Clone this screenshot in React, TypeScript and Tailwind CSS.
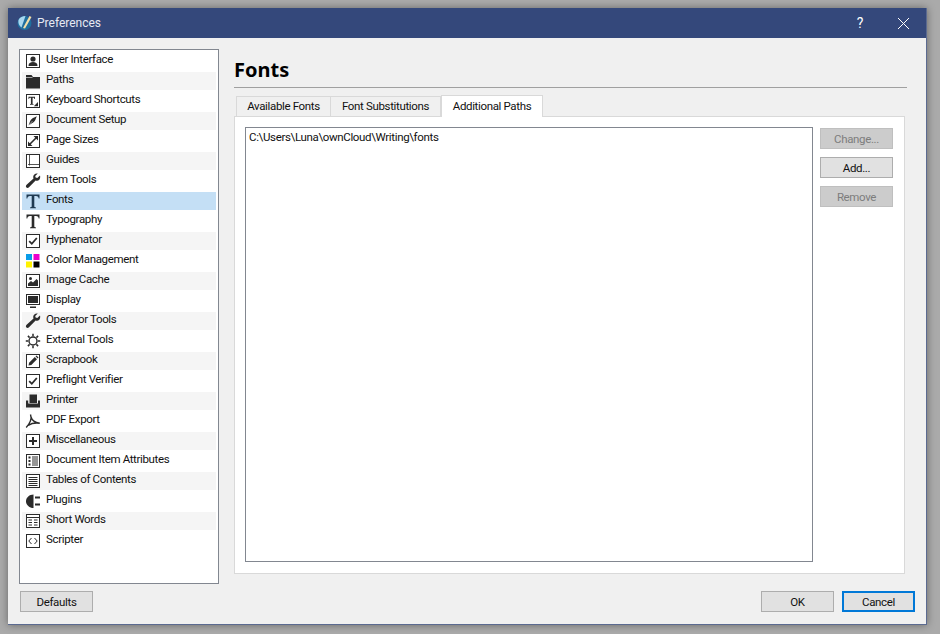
import React from 'react';

const ink = '#2b2b2b';

// small frame used by most of the preference icons
const Frame = ({ children }: { children?: React.ReactNode }) => (
    <svg width="16" height="16" viewBox="0 0 16 16" className="shrink-0">
        <rect x="1.5" y="1.5" width="13" height="13" fill="#fff" stroke={ink} />
        {children}
    </svg>
);

const Bare = ({ children }: { children?: React.ReactNode }) => (
    <svg width="16" height="16" viewBox="0 0 16 16" className="shrink-0">
        {children}
    </svg>
);

const wrench = 'M15 2.500 12.300 5 10.600 4.600 10.200 3 12.800 .6C10.500 .1 8.300 1.500 8.200 3.700 8.200 4.300 8.300 4.900 8.500 5.400L1.600 11.800C.7 12.700.7 13.800 1.400 14.500 2.100 15.200 3.200 15.200 4 14.300L10.600 7.600C11.100 7.800 11.700 7.900 12.300 7.800 14.500 7.500 15.700 5 15 2.500z';
const check = <path d="M4.200 8.200 6.800 10.800 11.800 5" fill="none" stroke={ink} strokeWidth="1.800" />;
const tShape = 'M1.500 1.500h13v4h-.8c-.2-1.600-.9-2.500-2.700-2.500H9.300v10c0 1 .4 1.300 1.700 1.400v.8H5v-.8c1.300-.1 1.700-.4 1.700-1.400V3H5c-1.800 0-2.500.9-2.700 2.500h-.8z';

const icons: Record<string, React.ReactNode> = {
    'User Interface': (
        <Frame>
            <circle cx="8" cy="6" r="2.600" fill={ink} />
            <path d="M3.500 13c0-3 1.800-4 4.500-4s4.500 1 4.500 4z" fill={ink} />
        </Frame>
    ),
    Paths: (
        <Bare>
            <path d="M1 2h5.500L8 4H15V15.500H1z" fill={ink} />
            <path d="M1 4.500h6.500" stroke="#fff" strokeWidth="0.600" />
        </Bare>
    ),
    'Keyboard Shortcuts': (
        <Frame>
            <path d="M3.500 3.800h6.500v2.200h-.6c-.2-.8-.5-1.200-1.400-1.200H7.600v5.600c0 .5.200.7.900.7v.6H5v-.6c.7 0 .9-.2.900-.7V4.800H5.400c-.9 0-1.200.4-1.400 1.200h-.5z" fill={ink} />
            <path d="M13 9v4.200H8.800z" fill={ink} />
        </Frame>
    ),
    'Document Setup': (
        <Frame>
            <path d="M3.500 12.500 5 8.500c.8-2 2.600-3.600 4.200-4l2.600-1.200-1.100 2.800c-.4 1.800-2 3.400-3.800 4.100z" fill={ink} />
            <path d="M3.500 12.500 7.500 8" stroke="#fff" strokeWidth="0.500" />
        </Frame>
    ),
    'Page Sizes': (
        <Frame>
            <path d="M3.500 12.500 12.500 3.500" stroke={ink} strokeWidth="1.600" />
            <path d="M8.500 3h4.500v4.500zM3 8.500V13h4.500z" fill={ink} />
        </Frame>
    ),
    Guides: (
        <Frame>
            <path d="M4.500 1.500v11M3 11.500h11.500" stroke={ink} strokeWidth="0.800" fill="none" />
        </Frame>
    ),
    'Item Tools': <Bare><path d={wrench} fill={ink} /></Bare>,
    Fonts: <Bare><path d={tShape} fill="#1f3a52" /></Bare>,
    Typography: <Bare><path d={tShape} fill={ink} /></Bare>,
    Hyphenator: <Frame>{check}</Frame>,
    'Color Management': (
        <Bare>
            <rect x="1" y="1" width="6" height="6" fill="#0a9de8" />
            <rect x="8.500" y="1" width="6" height="6" fill="#ee00cc" />
            <rect x="1" y="8.500" width="6" height="6" fill="#fff200" />
            <rect x="8.500" y="8.500" width="6" height="6" fill="#000" />
        </Bare>
    ),
    'Image Cache': (
        <Frame>
            <circle cx="5.500" cy="5.500" r="1.500" fill={ink} />
            <path d="M3 13V10.500L6 8l2 1.500 3.500-3.500L13 7.500V13z" fill={ink} />
        </Frame>
    ),
    Display: (
        <Bare>
            <rect x="1.500" y="1.500" width="13" height="10" fill="#fff" stroke={ink} />
            <rect x="3" y="3" width="10" height="7" fill={ink} />
            <rect x="5" y="13.500" width="6" height="1.500" fill={ink} />
        </Bare>
    ),
    'Operator Tools': <Bare><path d={wrench} fill={ink} /></Bare>,
    'External Tools': (
        <Bare>
            <circle cx="8" cy="8" r="4" fill="none" stroke={ink} strokeWidth="1.400" />
            <path d="M8 .8v2.400M8 12.800v2.400M.8 8h2.400M12.800 8h2.400M2.900 2.900l1.700 1.700M11.400 11.400l1.700 1.700M2.900 13.100l1.700-1.700M11.400 4.600l1.700-1.700" stroke={ink} strokeWidth="1.500" />
        </Bare>
    ),
    Scrapbook: (
        <Frame>
            <path d="m3.500 12.500.6-2.800 5.700-5.700 2.200 2.200-5.700 5.700z" fill={ink} />
            <path d="m10.500 3.300 1-.8 2 2-.8 1z" fill={ink} />
        </Frame>
    ),
    'Preflight Verifier': <Frame>{check}</Frame>,
    Printer: (
        <Bare>
            <path d="M4.500 1.500h7.500v8.500H4.500z" fill={ink} />
            <path d="M1 7.500h2.200V10.500H13V7.500H15V14.500H1z" fill={ink} />
        </Bare>
    ),
    'PDF Export': (
        <Bare>
            <path d="M5.500 1.500C7 5.500 4.800 10.500 1.200 14.500M5.800 3.500C6.800 7 10.500 9.700 14.800 10.200M3.200 12.300C6 10.500 10.500 9.700 14.800 10.200" fill="none" stroke={ink} strokeWidth="1.400" />
        </Bare>
    ),
    Miscellaneous: (
        <Frame>
            <path d="M8 4v8M4 8h8" stroke={ink} strokeWidth="2" />
        </Frame>
    ),
    'Document Item Attributes': (
        <Frame>
            <path d="M3.500 3.500h2v2h-2zM3.500 7h2v2h-2zM3.500 10.500h2v2h-2z" fill={ink} />
            <path d="M7 4h6M7 6h6M7 8h6M7 10h6M7 12h6" stroke={ink} />
        </Frame>
    ),
    'Tables of Contents': (
        <Frame>
            <path d="M3.500 4.500h9M3.500 6.500h9M3.500 8.500h9M3.500 10.500h9M3.500 12.500h9" stroke={ink} />
        </Frame>
    ),
    Plugins: (
        <Bare>
            <path d="M8.500 1.500V15C4.500 15 1 12 1 8.200S4.500 1.500 8.500 1.500z" fill={ink} />
            <rect x="10" y="3.500" width="5" height="2" fill={ink} />
            <rect x="10" y="10.500" width="5" height="2" fill={ink} />
        </Bare>
    ),
    'Short Words': (
        <Frame>
            <path d="M1.500 4.500h13" stroke={ink} />
            <path d="M3.500 7h3.500M9 7h3.500M3.500 9.500h3.500M9 9.500h3.500M3.500 12h3.500M9 12h3.500" stroke={ink} />
        </Frame>
    ),
    Scripter: (
        <Frame>
            <path d="M6.500 5 3.800 8l2.700 3M9.500 5l2.700 3-2.700 3" fill="none" stroke={ink} />
        </Frame>
    ),
};

const sections = Object.keys(icons);

const PushButton = ({
    label,
    disabled,
    focused,
}: {
    label: string;
    disabled?: boolean;
    focused?: boolean;
}) => {
    let look = 'border border-[#adadad] bg-[#e1e1e1] text-[#111]';
    if (disabled) look = 'border border-[#bfbfbf] bg-[#cccccc] text-[#7d7d7d]';
    if (focused) look = 'border-2 border-[#0078d7] bg-[#e1e1e1] text-[#111]';
    return (
        <button className={`flex h-[21px] w-[73px] shrink-0 items-center justify-center pt-[2px] text-[11.5px] leading-none ${look}`}>
            {label}
        </button>
    );
};

export default function App() {
    return (
        <div className="h-[634px] w-[940px] overflow-hidden bg-[#aaaaaa] pl-[8px] pt-[8px] font-['Roboto',sans-serif] tracking-[-0.35px]">
            <div className="flex h-[617px] w-[919px] flex-col border-b border-r border-[#5b6a90] bg-[#f0f0f0] shadow-[0_0_8px_rgba(0,0,0,0.4)]">
                {/* Title bar */}
                <div className="flex h-[30px] shrink-0 items-center bg-[#34487b] pl-[9px] text-white">
                    <svg width="16" height="16" viewBox="0 0 16 16" className="shrink-0">
                        <circle cx="7.500" cy="8" r="7" fill="#1f6f9f" />
                        <path d="M1.500 5C3 2 5.500 1 8.500 1L4.500 12.500C2 11 .9 8 1.500 5z" fill="#a9d8f0" />
                        <path d="M6 13 12.500 1 14.500 2 8 13.500z" fill="#f2dfa8" />
                    </svg>
                    <span className="ml-[4px] text-[12px] tracking-[0px] text-[#e6e9f2]">Preferences</span>
                    <span className="ml-auto mr-[34px] text-[14px] leading-none">?</span>
                    {/* close cross */}
                    <svg width="13" height="13" viewBox="0 0 13 13" className="mr-[16px] shrink-0">
                        <path d="M1 1 12 12M12 1 1 12" stroke="#fff" strokeWidth="1" fill="none" />
                    </svg>
                </div>

                <div className="flex min-h-0 flex-1 flex-col pb-[12px] pl-[11px] pr-[11px] pt-[11px]">
                    <div className="flex min-h-0 flex-1 gap-[15px]">
                        {/* Section list */}
                        <div className="flex h-[535px] w-[200px] shrink-0 flex-col gap-[2px] border border-[#828790] bg-white pl-[2px] pr-[2px] pt-[2px]">
                            {sections.map((name, i) => (
                                <div
                                    key={name}
                                    className={`flex h-[18px] shrink-0 items-center gap-[5px] pl-[3px] ${
                                        name === 'Fonts' ? 'bg-[#c4dff5]' : i % 2 === 1 ? 'bg-[#f5f5f5]' : ''
                                    }`}
                                >
                                    {icons[name]}
                                    <span className="mb-[2px] text-[11.5px] leading-none text-[#111]">{name}</span>
                                </div>
                            ))}
                        </div>

                        {/* Page */}
                        <div className="flex w-[673px] flex-col">
                            <div className="flex h-[39px] shrink-0 items-center border-b border-[#a0a0a0] pt-[4px]">
                                <h1 className="font-['Noto_Sans',sans-serif] text-[20px] font-bold leading-none tracking-[0px] text-black">Fonts</h1>
                            </div>

                            <div className="mt-[7px] flex h-[21px] shrink-0 items-end pl-[2px] text-[11.5px] leading-none text-[#111]">
                                <div className="flex h-[20px] w-[95px] items-center justify-center border border-b-0 border-[#d9d9d9] bg-[#f0f0f0] pt-[1px]">Available Fonts</div>
                                <div className="flex h-[20px] w-[110px] items-center justify-center border border-b-0 border-l-0 border-[#d9d9d9] bg-[#f0f0f0] pt-[1px]">Font Substitutions</div>
                                <div className="relative z-10 -mb-px flex h-[22px] w-[102px] items-center justify-center border border-b-0 border-[#d9d9d9] bg-white pt-[1px]">Additional Paths</div>
                            </div>

                            <div className="flex h-[458px] w-[671px] shrink-0 gap-[7px] border border-[#d9d9d9] bg-white p-[10px]">
                                <div className="h-[435px] w-[568px] border border-[#828790] bg-white px-[3px] py-[4px] text-[11.5px] leading-none text-[#111]">
                                    C:\Users\Luna\ownCloud\Writing\fonts
                                </div>
                                <div className="mt-px flex flex-col gap-[8px]">
                                    <PushButton label="Change..." disabled />
                                    <PushButton label="Add..." />
                                    <PushButton label="Remove" disabled />
                                </div>
                            </div>
                        </div>
                    </div>

                    {/* Dialog buttons */}
                    <div className="flex shrink-0 items-center pl-px">
                        <PushButton label="Defaults" />
                        <div className="ml-auto flex gap-[8px]">
                            <PushButton label="OK" />
                            <PushButton label="Cancel" focused />
                        </div>
                    </div>
                </div>
            </div>
        </div>
    );
}
